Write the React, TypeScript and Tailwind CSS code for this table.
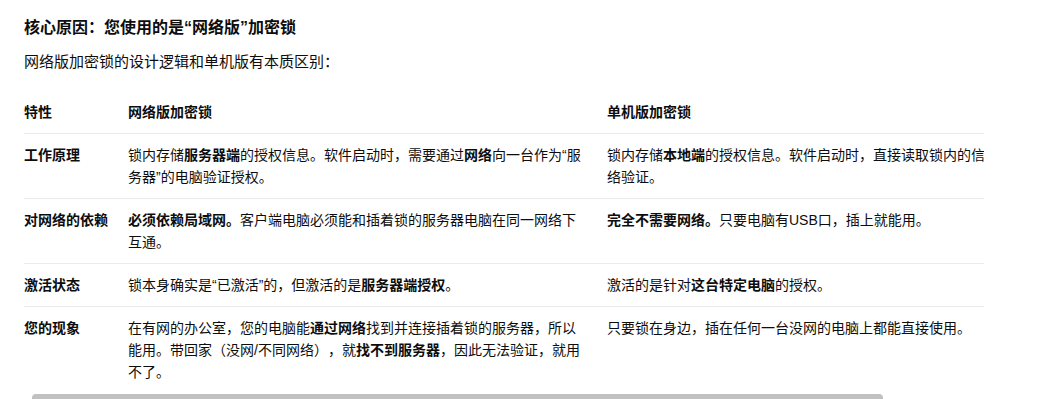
import React from "react";

const B = ({ children }: { children: React.ReactNode }) => (
  <b className="font-bold text-[#0d0d0d]">{children}</b>
);

const rows: { k: string; a: React.ReactNode; b: React.ReactNode }[] = [
  {
    k: "工作原理",
    a: (
      <>
        锁内存储<B>服务器端</B>的授权信息。软件启动时，需要通过<B>网络</B>向一台作为“服务器”的电脑验证授权。
      </>
    ),
    b: (
      <>
        锁内存储<B>本地端</B>的授权信息。软件启动时，直接读取锁内的信息，无需网络验证。
      </>
    ),
  },
  {
    k: "对网络的依赖",
    a: (
      <>
        <B>必须依赖局域网。</B>客户端电脑必须能和插着锁的服务器电脑在同一网络下互通。
      </>
    ),
    b: (
      <>
        <B>完全不需要网络。</B>只要电脑有USB口，插上就能用。
      </>
    ),
  },
  {
    k: "激活状态",
    a: (
      <>
        锁本身确实是“已激活”的，但激活的是<B>服务器端授权</B>。
      </>
    ),
    b: (
      <>
        激活的是针对<B>这台特定电脑</B>的授权。
      </>
    ),
  },
  {
    k: "您的现象",
    a: (
      <>
        在有网的办公室，您的电脑能<B>通过网络</B>找到并连接插着锁的服务器，所以能用。带回家（没网/不同网络），就<B>找不到服务器</B>，因此无法验证，就用不了。
      </>
    ),
    b: <>只要锁在身边，插在任何一台没网的电脑上都能直接使用。</>,
  },
];

export default function App() {
  return (
    <div
      className="bg-white text-[#0d0d0d] pl-[24px] pt-[16px] w-[1052px] h-[399px] overflow-hidden [text-spacing-trim:space-all]"
      style={{ fontFamily: '"Liberation Sans","Noto Sans CJK SC",sans-serif' }}
    >
      <h2 className="text-[16px] leading-[24px] font-bold">
        核心原因：您使用的是“网络版”加密锁
      </h2>
      <p className="mt-[10px] text-[15px] leading-[24px]">
        网络版加密锁的设计逻辑和单机版有本质区别：
      </p>
      <div className="mt-[17px] w-[960px] overflow-hidden">
        <table className="table-fixed border-collapse w-[1062px] text-[14px] leading-[22px]">
          <colgroup>
            <col className="w-[104px]" />
            <col className="w-[479px]" />
            <col className="w-[479px]" />
          </colgroup>
          <thead>
            <tr className="border-b border-[#ececec]">
              <th className="text-left font-bold py-[10px] pr-[20px]">特性</th>
              <th className="text-left font-bold py-[10px] pr-[20px]">网络版加密锁</th>
              <th className="text-left font-bold py-[10px] pr-[20px]">单机版加密锁</th>
            </tr>
          </thead>
          <tbody>
            {rows.map((r, i) => (
              <tr
                key={r.k}
                className={i < rows.length - 1 ? "border-b border-[#ececec]" : ""}
              >
                <td className="align-top font-bold py-[10px] pr-[20px]">{r.k}</td>
                <td className="align-top py-[10px] pr-[20px]">{r.a}</td>
                <td className="align-top py-[10px] pr-[20px]">{r.b}</td>
              </tr>
            ))}
          </tbody>
        </table>
      </div>
      <div className="mt-[1px] ml-[8px] h-[8px] w-[851px] rounded-full bg-[#c1c1c1]" />
    </div>
  );
}
